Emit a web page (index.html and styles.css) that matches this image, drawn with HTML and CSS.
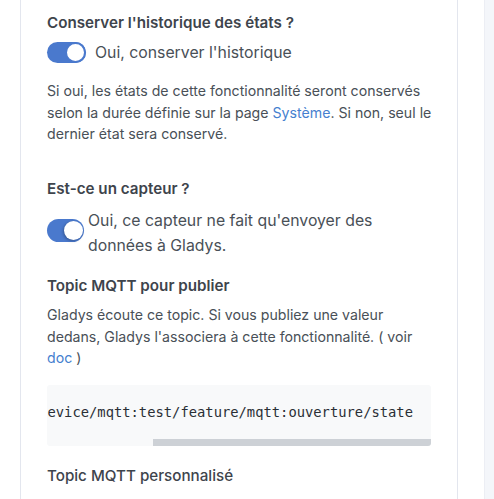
FILE: index.html
```html
<!DOCTYPE html>
<html lang="fr">
<head>
<meta charset="utf-8">
<title>Gladys MQTT</title>
<link rel="stylesheet" href="styles.css">
</head>
<body>
<div class="page">
  <div class="card">
    <div class="group">
      <div class="form-label">Conserver l'historique des états ?</div>
      <label class="switch">
        <span class="track"><span class="knob knob-bordered"></span></span>
        <span class="switch-text">Oui, conserver l'historique</span>
      </label>
      <p class="help help-history">Si oui, les états de cette fonctionnalité seront conservés selon la durée définie sur la page <a href="#">Système</a>. Si non, seul le dernier état sera conservé.</p>
    </div>

    <div class="group group-sensor">
      <div class="form-label">Est-ce un capteur ?</div>
      <label class="switch switch-sensor">
        <span class="track track-shadow"><span class="knob knob-shadow"></span></span>
        <span class="switch-text">Oui, ce capteur ne fait qu'envoyer des données à Gladys.</span>
      </label>
    </div>

    <div class="group group-topic">
      <div class="form-label">Topic MQTT pour publier</div>
      <p class="help">Gladys écoute ce topic. Si vous publiez une valeur dedans, Gladys l'associera à cette fonctionnalité. ( voir <a href="#">doc</a> )</p>
      <div class="code-box">
        <div class="code-line"><code class="code">gladys/master/device/mqtt:test/feature/mqtt:ouverture/state</code></div>
        <div class="scroll-track"><div class="scroll-thumb"></div></div>
      </div>
    </div>

    <div class="group group-custom">
      <div class="form-label form-label-light">Topic MQTT personnalisé</div>
      <p class="help">Si vous voulez que l'API MQTT par défaut soit remplacée par un topic personnalisé, renseignez-le ici.</p>
    </div>
  </div>
  <div class="gutter"></div>
  <div class="side"></div>
</div>
</body>
</html>
```

FILE: styles.css
```css
html, body {
  margin: 0;
  padding: 0;
  background: #ffffff;
}

body {
  font-family: "Inter", "Liberation Sans", sans-serif;
  color: #495057;
  height: 499px;
  overflow: hidden;
}

.page {
  display: flex;
  height: 499px;
}

.card {
  margin-left: 20px;
  width: 438px;
  flex: none;
  box-sizing: border-box;
  border-left: 1px solid #e3e6ee;
  border-right: 1px solid #e3e6ee;
  padding: 12px 26px 0 26px;
  background: #fff;
}

.gutter {
  width: 26px;
  flex: none;
}

.side {
  flex: 1;
  background: #f4f6fa;
  border-left: 1px solid #eceef4;
}

.group {
  display: flex;
  flex-direction: column;
}

.form-label {
  font-size: 15.2px;
  line-height: 22px;
  font-weight: 600;
  color: #3e444c;
}

.form-label-light {
  font-weight: 500;
}

.switch {
  display: flex;
  align-items: center;
  gap: 9px;
  margin-top: 6px;
}

.switch-sensor {
  margin-top: 8px;
  gap: 4px;
}

.track {
  display: flex;
  justify-content: flex-end;
  align-items: center;
  flex: none;
  width: 39px;
  height: 21px;
  border-radius: 11px;
  background: #4a79cd;
}

.track-shadow {
  width: 37px;
  height: 23px;
  border-radius: 12px;
  margin-top: -4px;
}

.knob {
  flex: none;
  border-radius: 50%;
  background: #fff;
  box-sizing: border-box;
}

.knob-bordered {
  width: 21px;
  height: 21px;
  border: 2px solid #4a79cd;
}

.knob-shadow {
  width: 19px;
  height: 19px;
  margin-right: 1px;
  box-shadow: -1px 1px 3px rgba(0, 0, 0, 0.28);
}

.switch-text {
  font-size: 15.8px;
  line-height: 25px;
  color: #495057;
}

.help {
  margin: 7px -6px 0 0;
  font-size: 14.15px;
  line-height: 21.5px;
  color: #495057;
}

.help-history {
  margin-top: 15px;
}

a {
  color: #467fcf;
  text-decoration: none;
}

.group-sensor {
  margin-top: 33px;
}

.group-topic {
  margin-top: 17.5px;
}

.code-box {
  margin-top: 16px;
  background: #f8f9fa;
  border-radius: 3px;
  padding-top: 17px;
  display: flex;
  flex-direction: column;
  overflow: hidden;
}

.code-line {
  display: flex;
  justify-content: flex-end;
  overflow: hidden;
  padding: 0 18px 0 0;
}

.code {
  flex: none;
  white-space: nowrap;
  font-family: "DejaVu Sans Mono", monospace;
  font-size: 13.8px;
  line-height: 21px;
  color: #2a2f35;
}

.scroll-track {
  display: flex;
  justify-content: flex-end;
  margin-top: 16px;
  height: 7px;
}

.scroll-thumb {
  width: 278px;
  background: #cdd1d6;
}

.group-custom {
  margin-top: 19px;
}
```
